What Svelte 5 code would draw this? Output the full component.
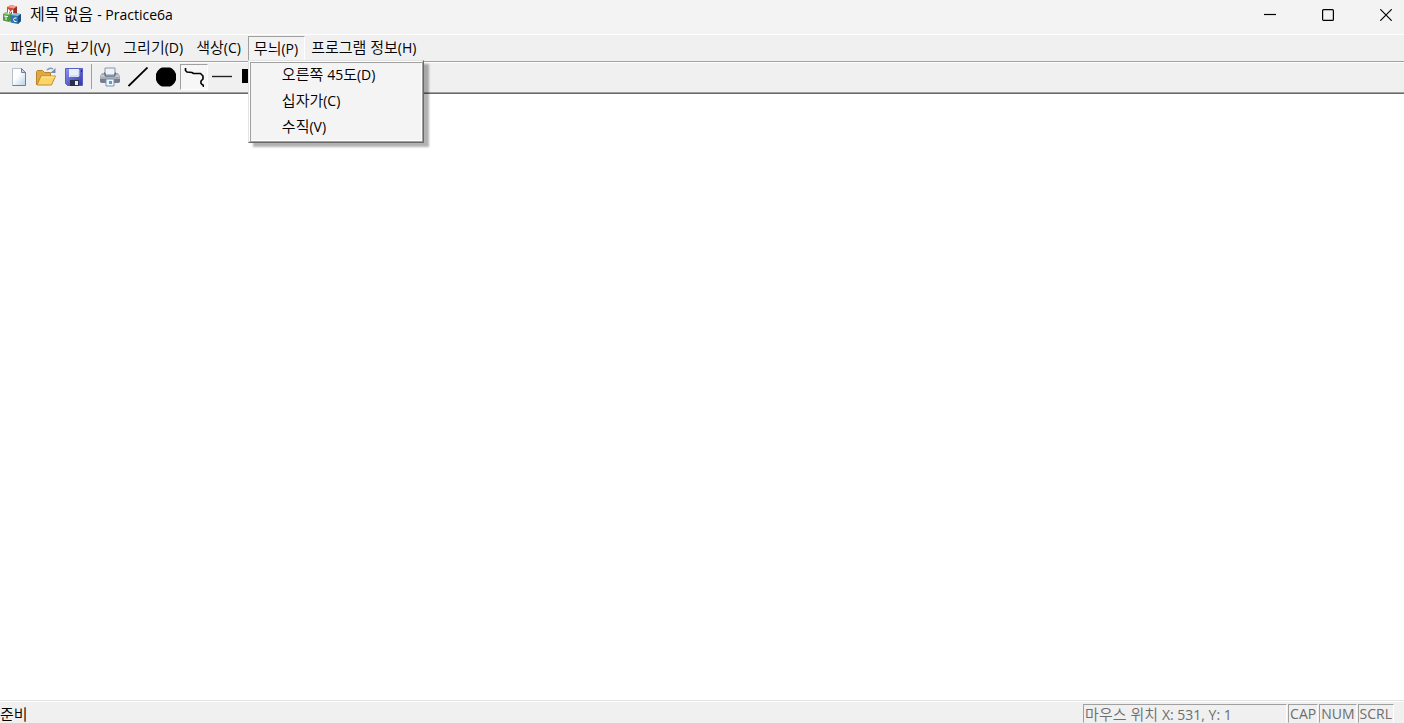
<script>
  let active = $state('P');
  let tool = $state('곡선');
  const menus = [
    { name: '파일', key: 'F' },
    { name: '보기', key: 'V' },
    { name: '그리기', key: 'D' },
    { name: '색상', key: 'C' },
    { name: '무늬', key: 'P' },
    { name: '프로그램 정보', key: 'H' },
  ];
  const patterns = [
    { name: '오른쪽 ', angle: '45', unit: '도', key: 'D' },
    { name: '십자가', key: 'C' },
    { name: '수직', key: 'V' },
  ];
</script>

<div class="window">
  <header class="titlebar">
    <svg class="logo" viewBox="0 0 20 20" aria-hidden="true">
      <path d="M5 2l4-2 6 1.500v7.500l-3 2-7-1z" fill="#cf4a3a" />
      <path d="M5 2l4-2 6 1.500-3 2z" fill="#f0a08c" />
      <path d="M12 3.500l3-2v8l-3 2z" fill="#9a2f24" />
      <path d="M1 9l3-2 5 1v8l-2 1-6-1.500z" fill="#4f9a3c" />
      <path d="M1 9l3-2 5 1-2 2z" fill="#9bd07e" />
      <path d="M8.500 10l3-2 7.500 1v7l-3 3-7.500-1.500z" fill="#3275ae" />
      <path d="M8.500 10l3-2 7.500 1-3 2z" fill="#8bc3e4" />
      <path d="M16 11l3-2v7l-3 3z" fill="#174f82" />
      <path d="M6.500 8.500V4.500l2 3 2-2.500v4" fill="none" stroke="#fff" />
      <path d="M2 11l4 .5M4 11.500v3.500M14.500 13h-2l-1 1.500 1 2h2" fill="none" stroke="#fff" />
    </svg>
    <h1>제목 없음 <span class="latin">- Practice6a</span></h1>
    <div class="controls">
      <button aria-label="최소화"><svg viewBox="0 0 12 12"><path d="M0 5.500h12" /></svg></button>
      <button aria-label="최대화"><svg viewBox="0 0 12 12"><rect x=".6" y=".6" width="10.800" height="10.800" rx="1" /></svg></button>
      <button aria-label="닫기"><svg viewBox="0 0 12 12"><path d="M.3.3l11.400 11.400M11.700.3L.3 11.700" /></svg></button>
    </div>
  </header>

  <nav class="menubar">
    {#each menus as menu}
      <div class="entry">
        <button class="menu" class:open={active === menu.key} onclick={() => (active = active === menu.key ? '' : menu.key)}>{menu.name}<span class="latin">({menu.key})</span></button>
        {#if active === menu.key && menu.key === 'P'}
          <div class="dropdown">
            <div class="list">
              {#each patterns as pattern}
                <button onclick={() => (active = '')}>{pattern.name}{#if pattern.angle}<span class="latin">{pattern.angle}</span>{pattern.unit}{/if}<span class="latin">({pattern.key})</span></button>
              {/each}
            </div>
          </div>
        {/if}
      </div>
    {/each}
  </nav>

  <div class="toolbar">
    <button aria-label="새로 만들기">
      <svg viewBox="0 0 20 20">
        <defs><linearGradient id="page" x2="1" y2="1"><stop offset=".4" stop-color="#fff" /><stop offset="1" stop-color="#b5d0ec" /></linearGradient></defs>
        <path d="M4.500 1.500h9l4 4v13h-13z" fill="url(#page)" stroke="#b4bfd0" />
        <path d="M13.500 1.500l4 4v13h-13" fill="none" stroke="#6a7fa3" />
        <path d="M13.500 1.500v4h4z" fill="#c5d5e9" stroke="#6a7fa3" />
      </svg>
    </button>
    <button aria-label="열기">
      <svg viewBox="0 0 20 20">
        <path d="M.5 17.500v-13l1-1h5l2 2h6v12z" fill="#e0a840" stroke="#b98429" />
        <path d="M1 18l4-9h14.500l-4 9z" fill="#fbd568" stroke="#c08d2c" />
        <path d="M5.500 10h13" stroke="#fff0aa" />
        <path d="M11 3q3-3 6-1" fill="none" stroke="#7e9bbb" stroke-width="1.500" />
        <path d="M19.500 1v5h-5z" fill="#6f8fb5" />
      </svg>
    </button>
    <button aria-label="저장">
      <svg viewBox="0 0 20 20">
        <defs><linearGradient id="disk" x2="1" y2="1"><stop stop-color="#8e96f2" /><stop offset="1" stop-color="#3333a5" /></linearGradient></defs>
        <path d="M1.500 1.500h17v17h-15l-2-2z" fill="url(#disk)" stroke="#5a5fc8" />
        <path d="M5 2h10v8H5z" fill="#e8effc" />
        <path d="M6 9h9V3" fill="none" stroke="#b8caee" />
        <path d="M6 13h9v6H6z" fill="#28304e" />
        <path d="M11 14h3v4h-3z" fill="#e8eefa" />
        <path d="M17 3h1v2h-1z" fill="#20247a" />
      </svg>
    </button>
    <span class="divider"></span>
    <button aria-label="인쇄">
      <svg viewBox="0 0 20 20">
        <path d="M5 1h10v7H5z" fill="#edf3fa" stroke="#8796aa" />
        <path d="M2 6h2v3h12V6h2l2 3v6l-2 1H2l-2-1V9z" fill="#a8adb9" />
        <path d="M1 9h18" stroke="#dbe0e8" />
        <path d="M0 12h20v3l-2 1H2l-2-1z" fill="#767d8b" />
        <path d="M4 6h1v3h10V6h1" fill="none" stroke="#49515f" />
        <path d="M6 12h8v7H6z" fill="#edf6ff" stroke="#7d91b0" />
        <path d="M9 14h3v3H9z" fill="#4da3cf" />
        <path d="M16 10h2v1h-2z" fill="#5ac552" />
      </svg>
    </button>
    <button aria-label="직선"><svg viewBox="0 0 20 20"><path d="M.5 19L19.500.5" stroke="#000" stroke-width="1.800" /></svg></button>
    <button aria-label="원"><svg viewBox="0 0 20 20"><path d="M6 .5h8l2 1 2.500 2.500 1.500 3v6l-1.500 3-2.500 2.500-2 1H6l-2-1L1.500 16 0 13V7l1.500-3L4 1.500z" /></svg></button>
    <button aria-label="곡선" class:pressed={tool === '곡선'} onclick={() => (tool = '곡선')}>
      <svg viewBox="0 0 20 20"><path d="M1.500 1v2.500l1.500 1.500 5 .5 1.500 1h7l2.500 2.500v3l-2 2v2.500l1 1 1.500 1v1.500" fill="none" stroke="#000" stroke-width="1.600" /></svg>
    </button>
    <button aria-label="가는 선"><svg viewBox="0 0 20 20"><path d="M0 9.500h20" stroke="#222" stroke-width="1.400" /></svg></button>
    <button aria-label="사각형"><svg viewBox="0 0 20 20"><path d="M2 2h16v14H2z" /></svg></button>
  </div>

  <main></main>

  <footer>
    <span class="ready">준비</span>
    <span class="pane position">마우스 위치 <span class="latin">X: 531, Y: 1</span></span>
    <span class="pane latin">CAP</span>
    <span class="pane latin">NUM</span>
    <span class="pane latin">SCRL</span>
  </footer>
</div>

<style>
  :global(body) { margin: 0; }
  .window {
    display: flex;
    flex-direction: column;
    height: 100vh;
    overflow: hidden;
    background: #f0f0f0;
    color: #000;
    font: 350 15px/18px "Open Sans", "Noto Sans CJK KR", sans-serif;
  }
  .latin { font-size: 14px; font-weight: 400; }
  button { margin: 0; padding: 0; border: 0; background: none; color: inherit; font: inherit; white-space: nowrap; }
  svg { display: block; width: 20px; height: 20px; flex: none; }
  .titlebar { display: flex; height: 34px; flex: none; background: #f3f3f3; border-bottom: 1px solid #fff; }
  .logo { margin: 5px 8px 0 2px; }
  h1 { margin: 0; font-size: 16px; font-weight: 350; line-height: 28px; }
  .controls { display: flex; margin-left: auto; margin-right: -11px; }
  .controls button { display: grid; place-items: center; width: 58px; height: 30px; }
  .controls svg { width: 12px; height: 12px; fill: none; stroke: #000; stroke-width: 1.2; }
  .menubar { display: flex; height: 26px; flex: none; padding-left: 4px; border-bottom: 1px solid #a0a0a0; }
  .entry { position: relative; }
  .menu { height: 24px; margin-top: 1px; padding: 0 6px 2px 5px; border: 1px solid transparent; border-bottom: 0; }
  .menu.open { border-color: #a0a0a0 #fff #fff #a0a0a0; background: #f3f3f3; padding: 0 6px 0 5px; }
  .dropdown {
    position: absolute;
    z-index: 1;
    top: 25px;
    left: 0;
    border: 1px solid;
    border-color: #e3e3e3 #696969 #696969 #e3e3e3;
    background: #f4f4f4;
    box-shadow: 5px 4px 2px rgba(0, 0, 0, 0.3);
  }
  .list {
    display: flex;
    flex-direction: column;
    width: 170px;
    border: 1px solid;
    border-color: #fff #a0a0a0 #a0a0a0 #fff;
    box-shadow: inset 1px 1px #a0a0a0, inset -1px -1px #fff;
    padding: 0 1px 1px;
  }
  .list button { height: 26px; padding: 0 0 2px 31px; text-align: left; }
  .toolbar { display: flex; height: 28px; flex: none; padding: 1px 0 0 4px; border-top: 1px solid #fff; border-bottom: 1px solid #a0a0a0; }
  .toolbar button { display: grid; place-items: center; width: 28px; height: 26px; box-sizing: border-box; }
  .toolbar .pressed { border: 1px solid; border-color: #a0a0a0 #fff #fff #a0a0a0; background: #f7f7f7; }
  .divider { width: 1px; height: 25px; margin: 0 4px 0 3px; background: #a0a0a0; }
  main { flex: 1; min-height: 0; background: #fff; border-top: 1px solid #696969; }
  footer { display: flex; gap: 1px; height: 22px; flex: none; padding-right: 10px; border-top: 1px solid #e3e3e3; box-shadow: inset 0 1px #fff; }
  .ready { flex: 1; padding-top: 4px; }
  .pane { margin-top: 3px; padding: 0 1px; border: 1px solid; border-color: #a0a0a0 #fff transparent #a0a0a0; color: #6d6d6d; white-space: nowrap; }
  .position { width: 200px; }
</style>
